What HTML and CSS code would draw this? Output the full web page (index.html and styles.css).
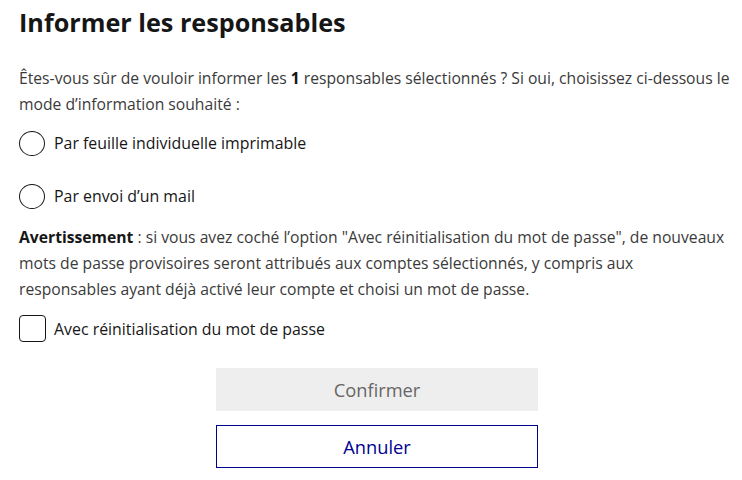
FILE: index.html
```html
<!DOCTYPE html>
<html lang="fr">
<head>
<meta charset="utf-8">
<link rel="stylesheet" href="styles.css">
</head>
<body>
<div class="modal">
  <h1 class="title">Informer les responsables</h1>
  <p class="intro">Êtes-vous sûr de vouloir informer les <b>1</b> responsables sélectionnés ? Si oui, choisissez ci-dessous le mode d’information souhaité :</p>
  <label class="radio"><span class="circle"></span><span>Par feuille individuelle imprimable</span></label>
  <label class="radio second"><span class="circle"></span><span>Par envoi d’un mail</span></label>
  <p class="warning"><b>Avertissement</b> : si vous avez coché l’option "Avec réinitialisation du mot de passe", de nouveaux mots de passe provisoires seront attribués aux comptes sélectionnés, y compris aux responsables ayant déjà activé leur compte et choisi un mot de passe.</p>
  <label class="check"><span class="box"></span><span>Avec réinitialisation du mot de passe</span></label>
  <div class="actions">
    <button class="btn confirm" type="button">Confirmer</button>
    <button class="btn cancel" type="button">Annuler</button>
  </div>
</div>
</body>
</html>
```
FILE: styles.css
```css
* { box-sizing: border-box; }
html, body { margin: 0; padding: 0; background: #fff; }
body { font-family: "Open Sans", "Liberation Sans", sans-serif; color: #3a3a3a; }
.modal { padding: 0 9px 0 19px; }
.title { margin: 0; padding-top: 4px; font-size: 25.2px; line-height: 36px; font-weight: 700; color: #161616; }
.intro { margin: 25px 0 0; font-size: 15.7px; line-height: 26px; }
.intro b, .warning b { font-weight: 700; color: #161616; }
.radio, .check { display: flex; align-items: center; gap: 9px; font-size: 15.9px; line-height: 26px; color: #161616; }
.radio { margin-top: 13px; }
.radio.second { margin-top: 27px; }
.circle { width: 26px; height: 25px; border: 1px solid #161616; border-radius: 50%; flex: none; }
.warning { margin: 15px 0 0; font-size: 15.7px; line-height: 26px; }
.check { margin-top: 13px; gap: 8px; }
.box { width: 27px; height: 27px; border: 1px solid #161616; border-radius: 4px; flex: none; }
.actions { display: flex; flex-direction: column; align-items: center; gap: 14px; margin-top: 26px; padding-left: 2px; }
.btn { width: 322px; height: 43px; font-family: inherit; font-size: 18.3px; border: 0; padding: 0; }
.confirm { background: #eeeeee; color: #666666; }
.cancel { background: #fff; border: 1px solid #000091; color: #000091; }
```
